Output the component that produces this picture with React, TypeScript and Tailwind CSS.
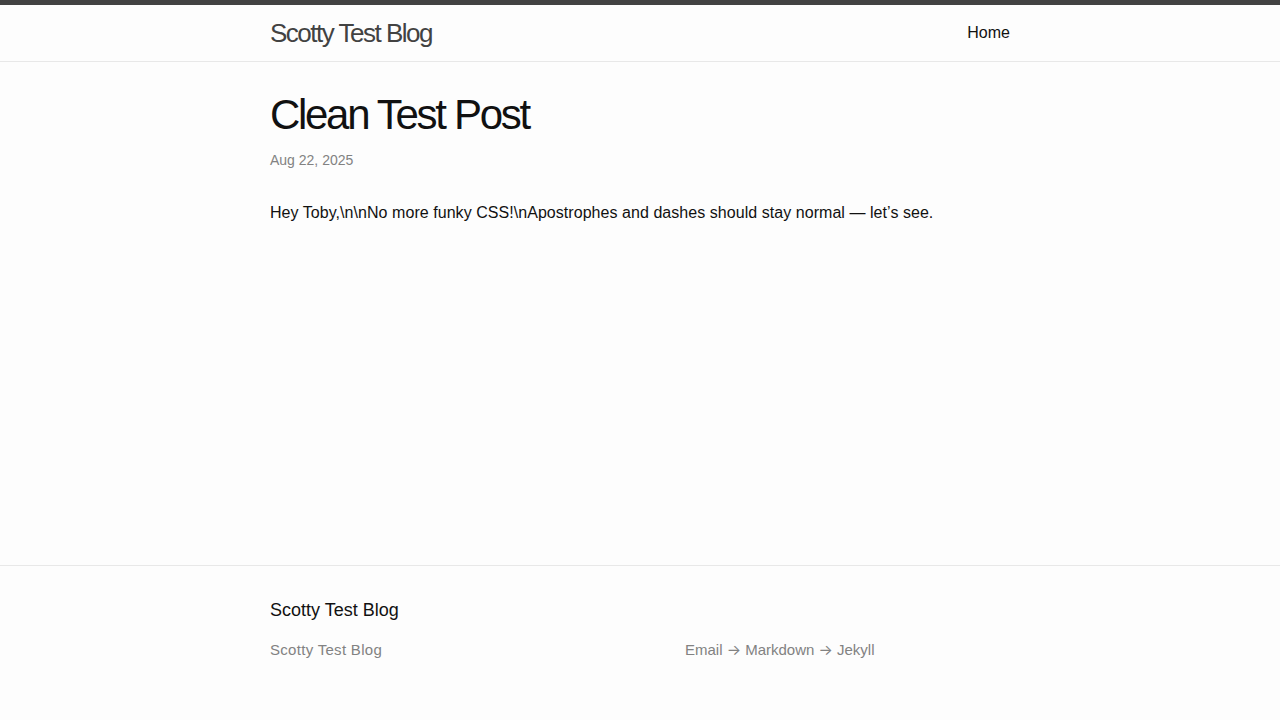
export default function App() {
  return (
    <div
      className="flex min-h-screen flex-col bg-[#fdfdfd] text-[16px] leading-[1.5] text-[#111]"
      style={{ fontFamily: '"Liberation Sans", Arial, sans-serif' }}
    >
      <header className="border-t-[5px] border-b border-t-[#424242] border-b-[#e8e8e8]">
        <div className="mx-auto flex w-[740px] items-start justify-between">
          <a className="text-[26px] font-light leading-[56px] tracking-[-1.5px] text-[#424242]">
            Scotty Test Blog
          </a>
          <nav className="leading-[56px]">
            <a className="text-[#111]">Home</a>
          </nav>
        </div>
      </header>

      <main className="flex-1 py-[30px]">
        <div className="mx-auto w-[740px]">
          <article>
            <header className="mb-[30px]">
              <h1 className="pt-[2px] text-[42px] leading-none tracking-[-2.3px]">Clean Test Post</h1>
              <p className="mt-[14px] text-[14px] text-[#828282]">Aug 22, 2025</p>
            </header>
            <div>
              <p className="tracking-[0.05px]">
                Hey Toby,\n\nNo more funky CSS!\nApostrophes and dashes should stay normal — let’s see.
              </p>
            </div>
          </article>
        </div>
      </main>

      <footer className="h-[155px] border-t border-[#e8e8e8] pt-[31px]">
        <div className="mx-auto w-[740px]">
          <h2 className="mb-[15px] text-[18px] leading-[27px]">Scotty Test Blog</h2>
          <div className="flex text-[15px] text-[#828282]">
            <div className="w-[415px] tracking-[0.3px]">Scotty Test Blog</div>
            <div>
              Email <span className="font-['Inter']">→</span> Markdown{" "}
              <span className="font-['Inter']">→</span> Jekyll
            </div>
          </div>
        </div>
      </footer>
    </div>
  );
}
